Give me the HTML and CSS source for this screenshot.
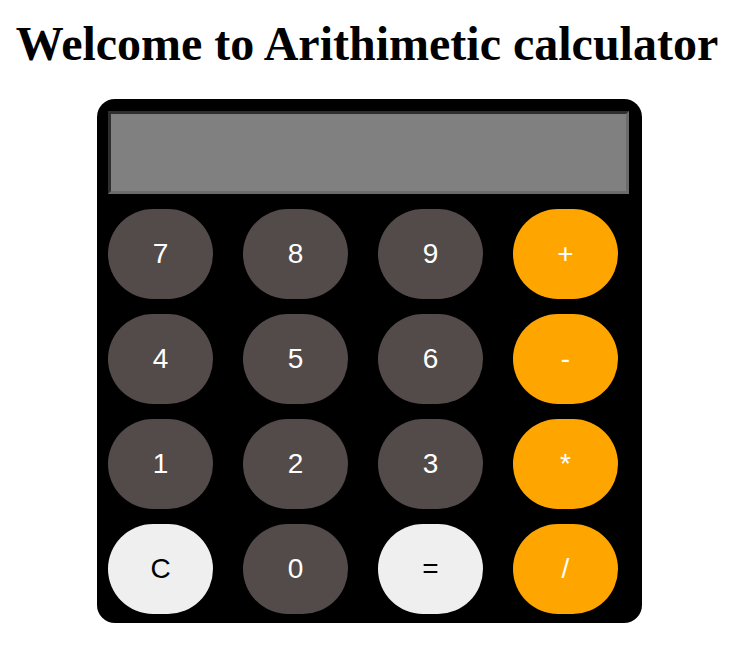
FILE: index.html
```html
<!DOCTYPE html>
<html>
<head>
<meta charset="utf-8">
<link rel="stylesheet" href="styles.css">
</head>
<body>
<h1 class="title">Welcome to Arithimetic calculator</h1>
<div class="calculator">
  <div class="display"></div>
  <div class="keys">
    <button class="key dark">7</button>
    <button class="key dark">8</button>
    <button class="key dark">9</button>
    <button class="key op">+</button>
    <button class="key dark">4</button>
    <button class="key dark">5</button>
    <button class="key dark">6</button>
    <button class="key op">-</button>
    <button class="key dark">1</button>
    <button class="key dark">2</button>
    <button class="key dark">3</button>
    <button class="key op">*</button>
    <button class="key light">C</button>
    <button class="key dark">0</button>
    <button class="key light">=</button>
    <button class="key op">/</button>
  </div>
</div>
</body>
</html>
```
FILE: styles.css
```css
body {
  margin: 8px;
  font-family: "Liberation Serif", serif;
  background: #fff;
}
.title {
  font-size: 48px;
  font-weight: bold;
  text-align: center;
  margin: 8px 0 28px;
}
.calculator {
  width: 521px;
  margin-left: 89px;
  padding: 12px 13px 9px 11px;
  background: #000;
  border-radius: 18px;
}
.display {
  height: 77px;
  background: #808080;
  border: 3px solid;
  border-color: #2e2e2e #6b6b6b #6b6b6b #2e2e2e;
  margin-bottom: 15px;
}
.keys {
  display: grid;
  grid-template-columns: repeat(4, 105px);
  column-gap: 30px;
  row-gap: 15px;
}
.key {
  width: 105px;
  height: 90px;
  border: none;
  border-radius: 45px;
  font-family: "Liberation Sans", Arial, sans-serif;
  font-size: 28px;
  padding: 0;
}
.dark { background: #534b49; color: #fff; }
.op { background: #ffa500; color: #fff; }
.light { background: #efefef; color: #000; }
```
